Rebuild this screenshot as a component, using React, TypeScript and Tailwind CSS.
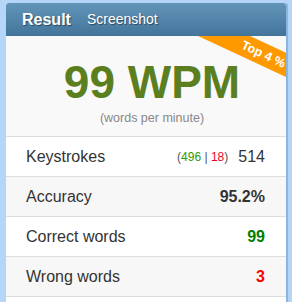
import React from 'react';

const rows = [
  { label: 'Keystrokes', bg: 'bg-white' },
  { label: 'Accuracy', bg: 'bg-[#f7f7f7]' },
  { label: 'Correct words', bg: 'bg-white' },
  { label: 'Wrong words', bg: 'bg-[#f7f7f7]' },
];

const Value = ({ label }: { label: string }) => {
  if (label === 'Keystrokes') {
    return (
      <div className="flex items-center gap-[10px]">
        <span className="text-[12px] text-[#555]">
          (<span className="text-[#339900]">496</span> | <span className="text-[#e8001c]">18</span>)
        </span>
        <span className="text-[16px] text-[#333]">514</span>
      </div>
    );
  }
  if (label === 'Accuracy') return <span className="text-[16px] font-bold text-[#333]">95.2%</span>;
  if (label === 'Correct words') return <span className="text-[16px] font-bold text-[#008000]">99</span>;
  return <span className="text-[16px] font-bold text-[#ff0000]">3</span>;
};

export default function App() {
  return (
    <div className="w-[292px] h-[302px] overflow-hidden bg-[#b6d6f9] pt-[3px] px-[6px] font-['Liberation_Sans',Arial,sans-serif]">
      <div className="h-full bg-white rounded-t-[3px] shadow-[2px_0_1px_rgba(60,110,170,0.35)] flex flex-col">
        <div className="h-[33px] rounded-t-[3px] bg-gradient-to-b from-[#6395b9] to-[#43749a] flex items-center pl-[16px] gap-[16px] text-white [text-shadow:1px_1px_1px_rgba(0,0,0,0.45)]">
          <span className="text-[16px] font-bold">Result</span>
          <span className="text-[14px]">Screenshot</span>
        </div>
        <div className="relative overflow-hidden h-[101px] bg-[#f9f9f9] border-b border-[#dddddd] flex flex-col items-center pt-[23px] pl-[12px]">
          <div className="absolute left-[181px] top-[9px] w-[160px] h-[22px] rotate-[25deg] bg-[#ff9900] flex items-center justify-center pr-[8px] text-white text-[12.5px] font-bold">
            Top 4 %
          </div>
          <div className="text-[46px] leading-[46px] font-bold text-[#5b7f1f]">99 WPM</div>
          <div className="mt-[5px] text-[12.5px] leading-[16px] text-[#888]">(words per minute)</div>
        </div>
        {rows.map((r) => (
          <div
            key={r.label}
            className={`h-[40px] border-b border-[#dddddd] flex items-center justify-between pl-[20px] pr-[21px] ${r.bg}`}
          >
            <span className="text-[16px] text-[#333]">{r.label}</span>
            <Value label={r.label} />
          </div>
        ))}
      </div>
    </div>
  );
}
